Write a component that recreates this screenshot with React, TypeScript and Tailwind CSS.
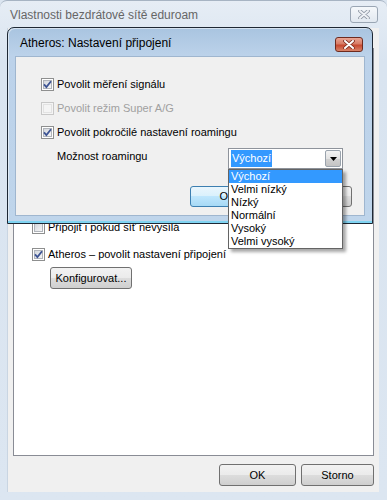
import React from 'react';

const Check = ({ checked = false, disabled = false }: { checked?: boolean; disabled?: boolean }) => (
  <span
    className={`flex h-[13px] w-[13px] shrink-0 items-center justify-center border ${
      disabled ? 'border-[#c8c8c8] bg-[#f4f4f4]' : 'border-[#8e8f8f] bg-white'
    }`}
  >
    <span
      className={`flex h-[9px] w-[9px] items-center justify-center border ${
        disabled
          ? 'border-[#e2e2e2] bg-[#f4f4f4]'
          : 'border-[#b0b4ba] bg-[linear-gradient(135deg,#d3d7dd,#f6f6f6)]'
      }`}
    >
      {checked && (
        <svg width="11" height="11" viewBox="0 0 11 11" className="shrink-0 overflow-visible">
          <path d="M2 5.3 L4.4 8 L9 2.2" fill="none" stroke="#3d5494" strokeWidth="1.8" />
        </svg>
      )}
    </span>
  </span>
);

const Btn = ({
  children,
  className = '',
  focused = false,
}: {
  children?: React.ReactNode;
  className?: string;
  focused?: boolean;
}) => (
  <div
    className={`flex shrink-0 items-center justify-center rounded-[3px] border text-[11px] text-black ${
      focused
        ? 'border-[#3c7fb1] bg-[linear-gradient(#eaf6fd,#d9f0fc_50%,#bee6fd_50%,#a7d9f5)]'
        : 'border-[#707070] bg-[linear-gradient(#f2f2f2,#ebebeb_50%,#dddddd_50%,#cfcfcf)]'
    } ${className}`}
  >
    {children}
  </div>
);

const XMark = ({ color, outline }: { color: string; outline: string }) => (
  <svg width="12" height="9" viewBox="0 0 12 9">
    <path d="M2 1 L10 8 M10 1 L2 8" stroke={outline} strokeWidth="3.6" strokeLinecap="round" />
    <path d="M2 1 L10 8 M10 1 L2 8" stroke={color} strokeWidth="2" strokeLinecap="round" />
  </svg>
);

const roamingOptions = ['Výchozí', 'Velmi nízký', 'Nízký', 'Normální', 'Vysoký', 'Velmi vysoký'];

export default function App() {
  return (
    <div className="relative h-[500px] w-[387px] overflow-hidden bg-[#dbe5f0] font-['Liberation_Sans',Arial,sans-serif] text-[11px] text-black">
      {/* Outer window: wireless network properties */}
      <div className="flex h-full flex-col rounded-t-[7px] border-t border-[#a7b4c3] bg-[linear-gradient(#e6edf5,#d9e4f0_60px,#dce6f1)]">
        <div className="flex h-[27px] shrink-0 items-center justify-between pl-[10px] pr-[9px]">
          <span className="text-[12px] text-[#666]">Vlastnosti bezdrátové sítě eduroam</span>
          <div className="flex h-[17px] w-[28px] items-center justify-center rounded-[3px] border border-[#9aa6b4] bg-[linear-gradient(#f5f8fb,#e1e8f0)]">
            <XMark color="#eef1f5" outline="#8a93a0" />
          </div>
        </div>

        <div className="mb-[8px] ml-[7px] mr-[8px] flex flex-1 flex-col border-l border-[#c9d5e2] bg-[#f0f0f0] px-[5px]">
          <div className="mt-[20px] flex flex-1 flex-col border border-[#898c95] bg-white pl-[18px] pt-[168px]">
            <div className="flex h-[20px] items-center gap-[3px]">
              <Check />
              <span>Připojit i pokud síť nevysílá</span>
            </div>
            <div className="mt-[7px] flex h-[20px] items-center gap-[3px]">
              <Check checked />
              <span>Atheros – povolit nastavení připojení</span>
            </div>
            <Btn className="ml-[18px] mt-[3px] h-[22px] w-[82px]">Konfigurovat...</Btn>
          </div>
          <div className="flex h-[36px] shrink-0 items-start justify-end gap-[5px] pt-[8px]">
            <Btn className="h-[22px] w-[77px]">OK</Btn>
            <Btn className="h-[22px] w-[73px]">Storno</Btn>
          </div>
        </div>
      </div>

      {/* Inner dialog: Atheros connection settings */}
      <div className="absolute left-[7px] top-[27px] flex h-[197px] w-[366px] flex-col rounded-t-[7px] border border-[#1e2834] bg-[linear-gradient(#a9c4e0,#bcd2ea_28px,#bfd5eb)] shadow-[inset_0_-2px_0_#80d4f2,inset_1px_1px_0_rgba(255,255,255,0.5)]">
        <div className="flex h-[28px] shrink-0 items-start justify-between pl-[12px] pr-[9px]">
          <span className="mt-[8px] text-[12px] leading-[14px]">Atheros: Nastavení připojení</span>
          <div className="mt-[9px] flex h-[15px] w-[28px] items-center justify-center rounded-[3px] border border-[#6e2a1e] bg-[linear-gradient(#eaa594,#d77c66_45%,#c7482f_55%,#d8846a)]">
            <XMark color="#ffffff" outline="#7a2a1c" />
          </div>
        </div>
        <div className="mx-[7px] mb-[7px] flex flex-1 flex-col border border-[#9fb6cf] bg-[#f0f0f0] pt-[15px]">
          <div className="flex h-[24px] items-center gap-[3px] pl-[25px]">
            <Check checked />
            <span>Povolit měření signálu</span>
          </div>
          <div className="flex h-[24px] items-center gap-[3px] pl-[25px]">
            <Check disabled />
            <span className="text-[#a0a0a0]">Povolit režim Super A/G</span>
          </div>
          <div className="flex h-[24px] items-center gap-[3px] pl-[25px]">
            <Check checked />
            <span>Povolit pokročilé nastavení roamingu</span>
          </div>
          <div className="mt-[4px] flex items-start pl-[41px]">
            <span className="w-[171px] pt-[1px] leading-[14px]">Možnost roamingu</span>
            <div className="flex h-[21px] w-[115px] items-stretch border border-[#8e939b] bg-white p-[1px]">
              <div className="flex flex-1 items-stretch pl-[1px]">
                <span className="flex items-center bg-[#3399ff] px-[1px] text-white">Výchozí</span>
              </div>
              <div className="flex w-[16px] items-center justify-center rounded-[2px] border border-[#9aa3ad] bg-[linear-gradient(#f3f3f3,#e3e3e3_50%,#d2d2d2_50%,#c4c4c4)]">
                <svg width="7" height="4" viewBox="0 0 7 4">
                  <path d="M0 0 H7 L3.5 4 Z" fill="#000" />
                </svg>
              </div>
            </div>
          </div>
          <div className="mt-[17px] flex justify-end gap-[12px] pr-[12px]">
            <Btn focused className="h-[21px] w-[75px]">OK</Btn>
            <Btn className="h-[21px] w-[75px]">Storno</Btn>
          </div>
        </div>
      </div>

      {/* Open dropdown list */}
      <div className="absolute left-[228px] top-[169px] flex w-[115px] flex-col border border-[#646464] bg-white shadow-[3px_3px_3px_rgba(0,0,0,0.35)]">
        {roamingOptions.map((opt, i) => (
          <div
            key={opt}
            className={`h-[13px] pl-[2px] leading-[13px] ${i === 0 ? 'bg-[#3399ff] text-white' : ''}`}
          >
            {opt}
          </div>
        ))}
      </div>
    </div>
  );
}
